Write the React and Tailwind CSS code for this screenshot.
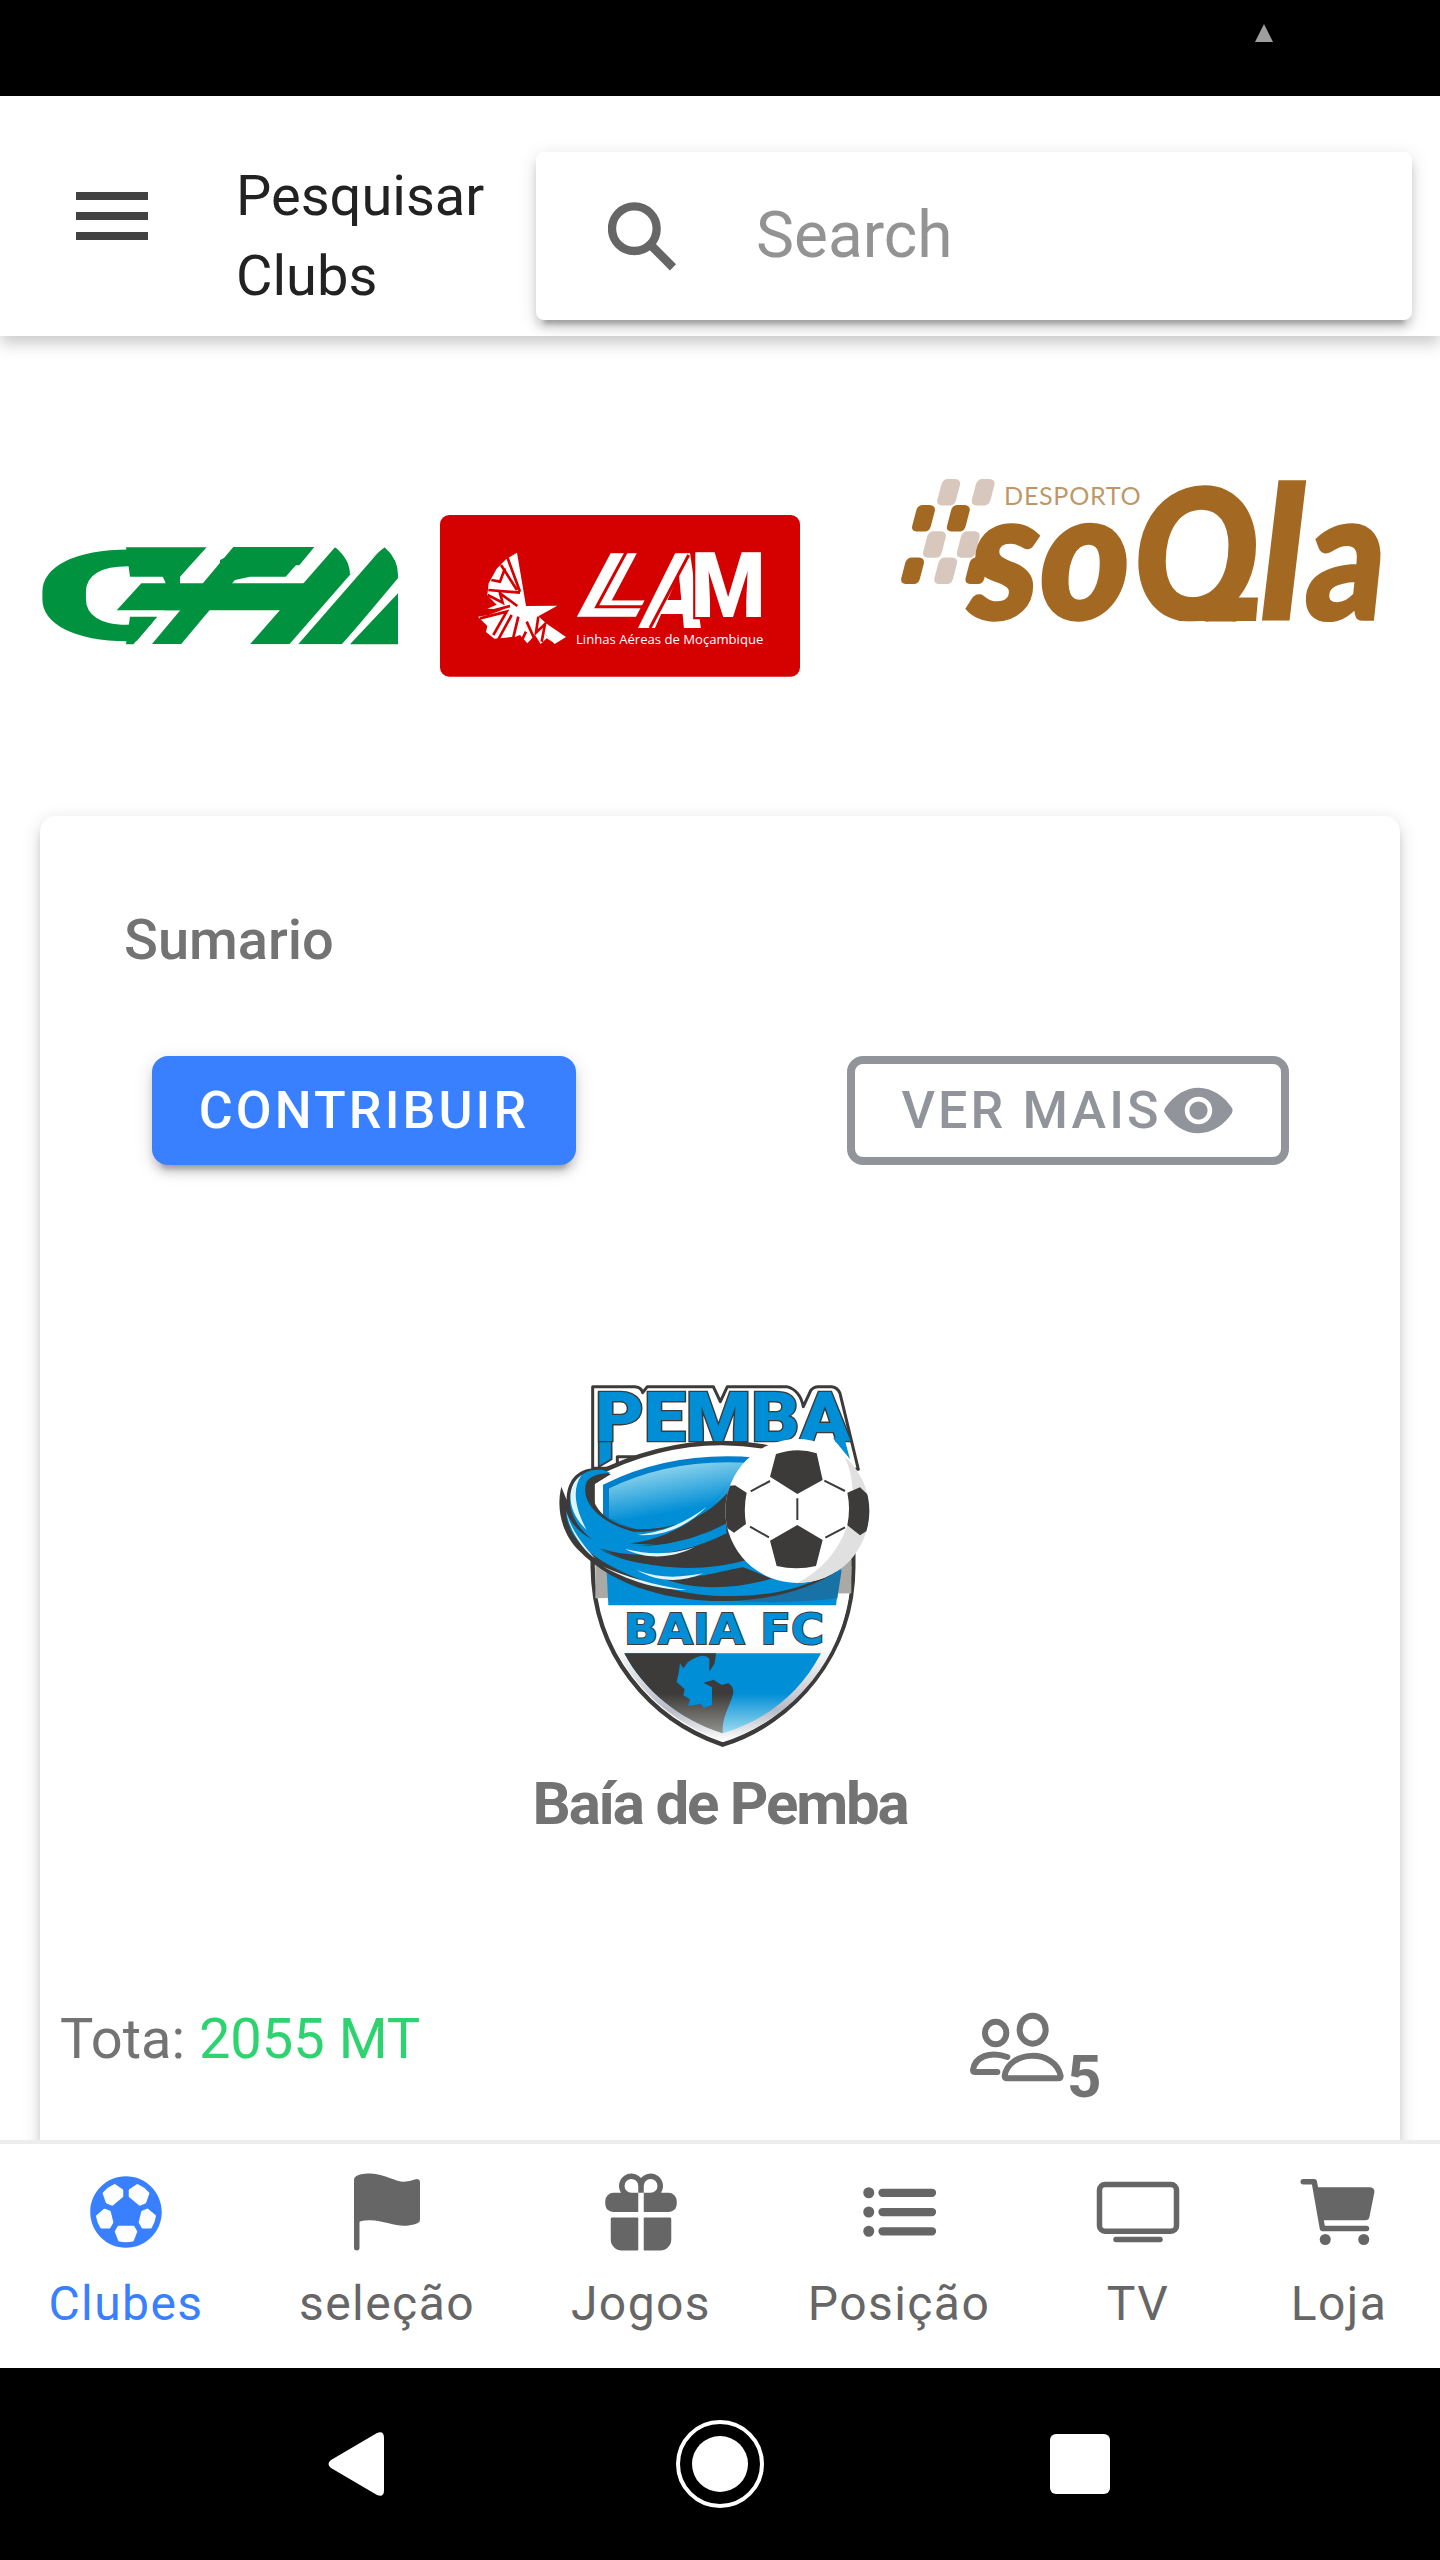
import { IoCart, IoEye, IoFlag, IoFootball, IoGift, IoList, IoTvOutline } from "react-icons/io5";

const GREEN = "#00923f";
const BROWN = "#a36922";
const SAND = "#d8c7bd";
const BLUE = "#008ed6";
const DARK = "#3c3b39";

function CfmLogo() {
  return (
    <svg className="mt-[124px] ml-5 h-60 w-[400px] shrink-0" viewBox="0 0 1200 720" fill={GREEN} fontFamily="Roboto" fontWeight="900">
      <clipPath id="cfmMark"><path d="M690 553 945 262Q990 300 990 345L1094 262Q1134 300 1134 345V553Z" /></clipPath>
      <text transform="translate(47 529) scale(2.35 1)" fontSize="345" fontWeight="400" stroke={GREEN} strokeWidth="14" vectorEffect="non-scaling-stroke">C</text>
      <path d="M560 250 480 350V370H560L660 250ZM290 451V470H412L335 560H520L620 451ZM480 370H560V451H480Z" fill="#fff" />
      <path d="M318 262H560L480 350H330ZM330 470H412L340 553H318Z" />
      <text transform="translate(368 553) skewX(-40) scale(1.25 1)" fontSize="409">F</text>
      <g clipPath="url(#cfmMark)">
        <text transform="translate(690 553) skewX(-40) scale(.75 1)" fontSize="409" stroke={GREEN} strokeWidth="70">M</text>
        <path d="M815 560 1075 262M972 560 1140 372" stroke="#fff" strokeWidth="20" />
      </g>
      <path d="M364 370H860L790 451H290ZM990 553 1134 400V553Z" />
      <path d="M600 300 680 262H875L797 350H690L600 370Z" />
    </svg>
  );
}

function LamLogo() {
  return (
    <svg className="mt-[164px] h-[190px] w-[400px] shrink-0" viewBox="0 0 1200 570">
      <rect x="60" y="45" width="1080" height="485" rx="28" fill="#d50000" />
      <g fill="#fff">
        <path d="M291 158 318 318 412 317 355 349 380 371 438 411 404 432 377 404 345 398 320 380 284 410 223 416 198 396 202 378 174 350 206 345 252 328 202 326 230 314 202 286 206 250 230 206 258 178Z" />
        <path d="M377 404 340 378 300 385 282 412 300 405 322 430 345 405 362 432 380 415 404 430Z" />
        <g stroke="#d50000" strokeWidth="8" fill="none">
          <path d="M262 172 300 275M243 195 291 270M214 240 240 245 255 205M205 270 300 278M203 285 248 308 240 280 292 318M270 318 202 336M180 355 260 335 220 405M275 345 235 418M295 350 280 412M320 365 350 432M318 395 300 432M355 350 348 398 375 372 365 425" />
        </g>
        <g fontFamily="Roboto" fontWeight="900" paintOrder="stroke">
          <text transform="translate(468 341) skewX(-28) scale(1.35 1)" fontSize="245" stroke="#fff" strokeWidth="16">L</text>
          <text transform="translate(655 383) skewX(-10) scale(.87 1)" fontSize="316">A</text>
          <text transform="translate(812 350) scale(.95 1)" fontSize="270" stroke="#d50000" strokeWidth="14">M</text>
        </g>
        <path d="M622 150 530 320H670M806 165 690 384" stroke="#d50000" strokeWidth="9" fill="none" />
        <text x="468" y="432" fontFamily="Open Sans" fontSize="40" textLength="562" lengthAdjust="spacingAndGlyphs">Linhas Aéreas de Moçambique</text>
      </g>
    </svg>
  );
}

const tiles = [
  [172, 57, SAND], [276, 57, SAND], [96, 136, BROWN], [201, 136, BROWN],
  [129, 215, SAND], [231, 215, SAND], [63, 294, BROWN], [163, 294, SAND], [257, 294, BROWN],
];

function SoqlaLogo() {
  return (
    <svg className="mt-[124px] ml-[60px] h-[180px] w-[520px] shrink-0" viewBox="0 0 1568 543">
      <clipPath id="soqlaBox"><rect x="0" y="0" width="1568" height="487" /></clipPath>
      {tiles.map(([x, y, fill]) => (
        <path key={x + "-" + y} fill={fill} transform={`translate(${x} ${y})`} d="M31 0H54Q72 2 69 18L57 64Q53 78 41 80H13Q-3 78 1 62L13 16Q17 2 31 0Z" />
      ))}
      <text x="374" y="136" fill={BROWN} fillOpacity=".7" fontFamily="Lato" fontSize="76" textLength="412">DESPORTO</text>
      <g fill={BROWN} stroke={BROWN} fontFamily="Lato" fontWeight="900" fontStyle="italic" fontSize="540" strokeWidth="10">
        <text transform="translate(270 481) scale(.96 1)">s</text>
        <text transform="translate(482 481) scale(.96 1)">o</text>
        <g clipPath="url(#soqlaBox)">
          <text transform="translate(765 481) scale(.92 1)">Q</text>
        </g>
        <text transform="translate(1148 481) scale(1 1.02)">l</text>
        <text transform="translate(1272 481) skewX(-6) scale(.86 1)" fontStyle="normal">a</text>
        <path d="M930 415H1140L1134 486H900Z" stroke="none" />
      </g>
    </svg>
  );
}

function PembaCrest() {
  return (
    <svg className="ml-[500px] h-[400px] w-[350px]" viewBox="0 0 1050 1200">
      <defs>
        <linearGradient id="sky" x1="0" y1="0" x2=".35" y2="1">
          <stop offset="0" stopColor="#b6e6ee" /><stop offset=".25" stopColor="#80cdea" /><stop offset=".75" stopColor={BLUE} />
        </linearGradient>
        <linearGradient id="sea" x1="0" y1="0" x2="0" y2="1">
          <stop offset=".5" stopColor={BLUE} /><stop offset="1" stopColor="#9edcf0" />
        </linearGradient>
        <linearGradient id="land" x1="0" y1="0" x2="0" y2="1">
          <stop offset=".5" stopColor={DARK} /><stop offset="1" stopColor="#92928e" />
        </linearGradient>
        <linearGradient id="rim" x1="0" y1="0" x2="0" y2="1">
          <stop offset=".45" stopColor="#fff" /><stop offset=".82" stopColor="#b9bcc6" /><stop offset="1" stopColor="#fff" />
        </linearGradient>
        <clipPath id="ball"><circle cx="772" cy="423" r="216" /></clipPath>
      </defs>
      <path d="M158 50H285Q305 52 308 68L322 50H520L541 95 562 50H740Q780 60 790 110L812 62Q820 50 835 50H875Q893 52 900 70L955 298H930L900 260H232V295H158Z" fill="#fff" stroke={DARK} strokeWidth="9" strokeLinejoin="round" />
      <path d="M158 318Q540 120 940 318V590C940 850 760 1060 548 1124C330 1050 160 850 158 590Z" fill="#fff" stroke={DARK} strokeWidth="13" />
      <path d="M166 590H934C934 860 750 1055 548 1114C340 1040 170 850 166 590Z" fill="url(#rim)" />
      <path d="M166 570H934V670L166 685Z" fill="#aaa9a6" />
      <path d="M198 560H908L888 706H205Z" fill={BLUE} />
      <path d="M560 690Q760 680 905 600L892 685Q720 705 560 690Z" fill="#1872a5" />
      <path d="M198 350Q400 250 650 272L560 440 320 500 198 450Z" fill="url(#sky)" stroke="#0080cc" strokeWidth="18" />
      <path d="M176 68H215V268L176 291Z" fill={BLUE} stroke={DARK} strokeWidth="5" />
      <text x="166" y="214" textLength="765" lengthAdjust="spacingAndGlyphs" fontFamily="Roboto" fontWeight="900" fontSize="206" fill={BLUE} stroke={DARK} strokeWidth="8" paintOrder="stroke">PEMBA</text>
      <path d="M879 205 930 268 912 200Z" fill={BLUE} />
      <path d="M180 294C105 290 80 340 80 390L64 350C45 430 75 500 115 540C230 660 410 695 560 693C710 690 820 650 890 605L570 465 590 330C530 430 420 480 290 478C190 460 145 400 160 345L212 313Z" fill={DARK} />
      <path d="M190 300C115 290 88 350 90 400C95 450 130 490 160 510C120 490 90 460 78 420C80 480 115 530 190 575C320 650 450 680 580 678C690 678 780 655 850 620L620 570C480 610 300 600 180 535C300 575 440 550 560 490L555 410C470 525 360 530 270 520C370 510 500 450 582 320C510 430 400 490 280 485C170 455 120 390 140 335Q158 310 212 309Z" fill={BLUE} />
      <path d="M270 527C380 535 490 480 570 375L568 455C490 500 370 535 270 527Z" fill={DARK} />
      <path d="M175 535C300 610 460 590 575 530L605 570C460 610 290 590 175 535ZM360 622C480 630 550 600 610 592L695 626C570 662 450 660 360 622Z" fill={DARK} />
      <path d="M125 315C72 350 85 430 140 480C105 415 95 355 125 315ZM80 430C90 490 140 550 165 565C125 520 95 480 80 430ZM190 590C280 640 370 660 440 660C340 645 260 620 190 590ZM290 495C380 485 440 455 500 410C445 465 380 500 290 495ZM255 537C340 558 410 550 465 530C400 565 320 570 255 537ZM290 600C370 630 430 620 490 610C420 640 350 635 290 600Z" fill="#dff5fc" />
      <circle cx="772" cy="423" r="216" fill="#fff" />
      <g clipPath="url(#ball)">
        <path d="M690 207H855L908 250C975 370 930 560 770 640H1000V180H690Z" fill="#dfe0df" />
        <g fill={DARK}>
          <path d="M708 252Q772 230 830 250L848 330 772 372 690 320ZM772 465 848 510 828 588Q770 602 710 588L690 512ZM540 350 585 346 620 368Q610 415 618 462L582 488 540 460ZM922 368 960 352 1000 390V470L960 496 922 466Q932 415 922 368Z" />
        </g>
        <path d="M772 385V450M690 333 632 364M853 332 915 363M630 470 687 502M915 472 856 503" stroke={DARK} strokeWidth="6" />
      </g>
      <text x="252" y="823" textLength="600" lengthAdjust="spacingAndGlyphs" fontFamily="DejaVu Sans" fontWeight="700" fontSize="127" fill={BLUE} stroke={DARK} strokeWidth="6" paintOrder="stroke">BAIA FC</text>
      <path d="M253 850H843C780 970 680 1050 548 1090C420 1050 310 960 253 850Z" fill="url(#sea)" />
      <path d="M253 850H528L524 880 508 905 518 928 545 945 565 940Q582 950 580 970C570 1010 545 1040 548 1090C420 1050 310 960 253 850Z" fill="url(#land)" />
      <path d="M420 880 430 895 444 876Q490 845 508 866V900L520 930 490 938 516 952V1005L492 1014 482 1002 444 1008 450 988 430 976 434 958 410 936 416 908Z" fill={BLUE} />
    </svg>
  );
}

function SearchIcon() {
  return (
    <svg className="h-[69px] w-[69px]" viewBox="144 221 207 207" fill="none" stroke="#666666">
      <circle cx="223" cy="301" r="67" strokeWidth="25" />
      <path d="M274 352 339 417" strokeWidth="26" />
    </svg>
  );
}

function MembersIcon() {
  return (
    <svg className="mt-[9px] h-[70px] w-[94px]" viewBox="90 66 282 210" fill="none" stroke="currentColor" strokeWidth="18" strokeLinecap="round" strokeLinejoin="round">
      <ellipse cx="167" cy="129" rx="32" ry="34" />
      <ellipse cx="278" cy="119" rx="39" ry="42" />
      <path d="M202 201C150 182 105 200 99 240Q99 246 106 246H172" />
      <path d="M194 258C205 180 345 175 362 258Q362 265 355 265H202Q194 265 194 258Z" />
    </svg>
  );
}

const tabs = [
  { label: "Clubes", Icon: IoFootball, width: "w-[252px]", color: "text-[#3880ff]" },
  { label: "seleção", Icon: IoFlag, width: "w-[270px]", color: "text-[#666666]" },
  { label: "Jogos", Icon: IoGift, width: "w-[238px]", color: "text-[#666666]" },
  { label: "Posição", Icon: IoList, width: "w-[278px]", color: "text-[#666666]" },
  { label: "TV", Icon: IoTvOutline, width: "w-[200px]", color: "text-[#666666]" },
  { label: "Loja", Icon: IoCart, width: "w-[202px]", color: "text-[#666666]" },
];

const raised = "shadow-[0_12px_4px_-8px_rgba(0,0,0,0.2),0_8px_8px_0_rgba(0,0,0,0.14),0_4px_20px_0_rgba(0,0,0,0.12)]";

export default function App() {
  return (
    <div className="flex h-[2560px] w-[1440px] flex-col overflow-hidden bg-white font-['Roboto',sans-serif]">
      <div className="flex h-24 shrink-0 justify-end bg-black pt-6 pr-[167px]">
        <svg className="h-[18px] w-[18px]" viewBox="0 0 18 18"><path d="M9 0 18 18H0Z" fill="#9e9e9e" /></svg>
      </div>

      <header className="z-10 flex h-60 shrink-0 bg-white shadow-[0_8px_14px_0_rgba(0,0,0,0.2)]">
        <button className="mt-24 ml-[76px] flex h-12 w-[72px] flex-col gap-3" aria-label="Menu">
          <span className="h-2 w-full bg-[#424242]" />
          <span className="h-2 w-full bg-[#424242]" />
          <span className="h-2 w-full bg-[#424242]" />
        </button>
        <h1 className="mt-[60px] ml-[88px] w-[300px] text-[56px] leading-20 text-[#222222]">Pesquisar Clubs</h1>
        <div className={`mt-14 flex h-[168px] w-[876px] items-center rounded-lg bg-white pl-[72px] ${raised}`}>
          <SearchIcon />
          <span className="ml-[79px] text-[64px] text-[#939393]">Search</span>
        </div>
      </header>

      <main className="flex h-[1804px] shrink-0 flex-col overflow-hidden">
        <div className="flex h-[480px] shrink-0 items-start">
          <CfmLogo />
          <LamLogo />
          <SoqlaLogo />
        </div>

        <section className={`mx-10 flex h-[1400px] shrink-0 flex-col rounded-2xl bg-white pt-[84px] text-[#737373] ${raised}`}>
          <h2 className="ml-[84px] text-[56px] leading-20 font-medium">Sumario</h2>
          <div className="mt-19 mr-[111px] ml-28 flex justify-between text-[52px] font-medium tracking-[0.06em]">
            <button className={`flex h-[109px] w-[424px] items-center justify-center rounded-2xl bg-[#3880ff] text-white ${raised}`}>CONTRIBUIR</button>
            <button className="flex h-[109px] w-[442px] items-center justify-center rounded-2xl border-8 border-[#92949c] text-[#92949c]">
              VER MAIS<IoEye className="h-[73px] w-[73px]" />
            </button>
          </div>
          <div className="mt-[205px]">
            <PembaCrest />
            <p className="text-center text-[60px] leading-17 font-bold tracking-[-2.2px]">Baía de Pemba</p>
          </div>
          <div className="mt-[161px] flex">
            <p className="ml-5 w-[910px] text-[56px] leading-20">
              Tota: <span className="text-[#2dd36f]">2055 MT</span>
            </p>
            <div className="flex pt-1">
              <MembersIcon />
              <span className="mt-[40px] ml-[3px] text-[60px] leading-17 font-bold">5</span>
            </div>
          </div>
        </section>
      </main>

      <nav className="flex h-[228px] shrink-0 border-t-4 border-[#ededed] bg-white pt-6">
        {tabs.map(({ label, Icon, width, color }) => (
          <div key={label} className={`flex flex-col items-center ${width} ${color}`}>
            <Icon className="h-22 w-22" />
            <span className="mt-5 text-[48px] leading-14 tracking-[0.03em]">{label}</span>
          </div>
        ))}
      </nav>

      <div className="flex h-48 shrink-0 items-center bg-black pl-[328px]">
        <svg className="h-16 w-14" viewBox="0 0 56 64" fill="#fff">
          <path d="M49 1Q56-2 56 6V58Q56 66 49 63L3 36Q-2 32 3 28Z" />
        </svg>
        <div className="ml-[292px] flex h-22 w-22 items-center justify-center rounded-full border-4 border-white">
          <div className="h-14 w-14 rounded-full bg-white" />
        </div>
        <div className="ml-[286px] h-15 w-15 rounded-md bg-white" />
      </div>
    </div>
  );
}
